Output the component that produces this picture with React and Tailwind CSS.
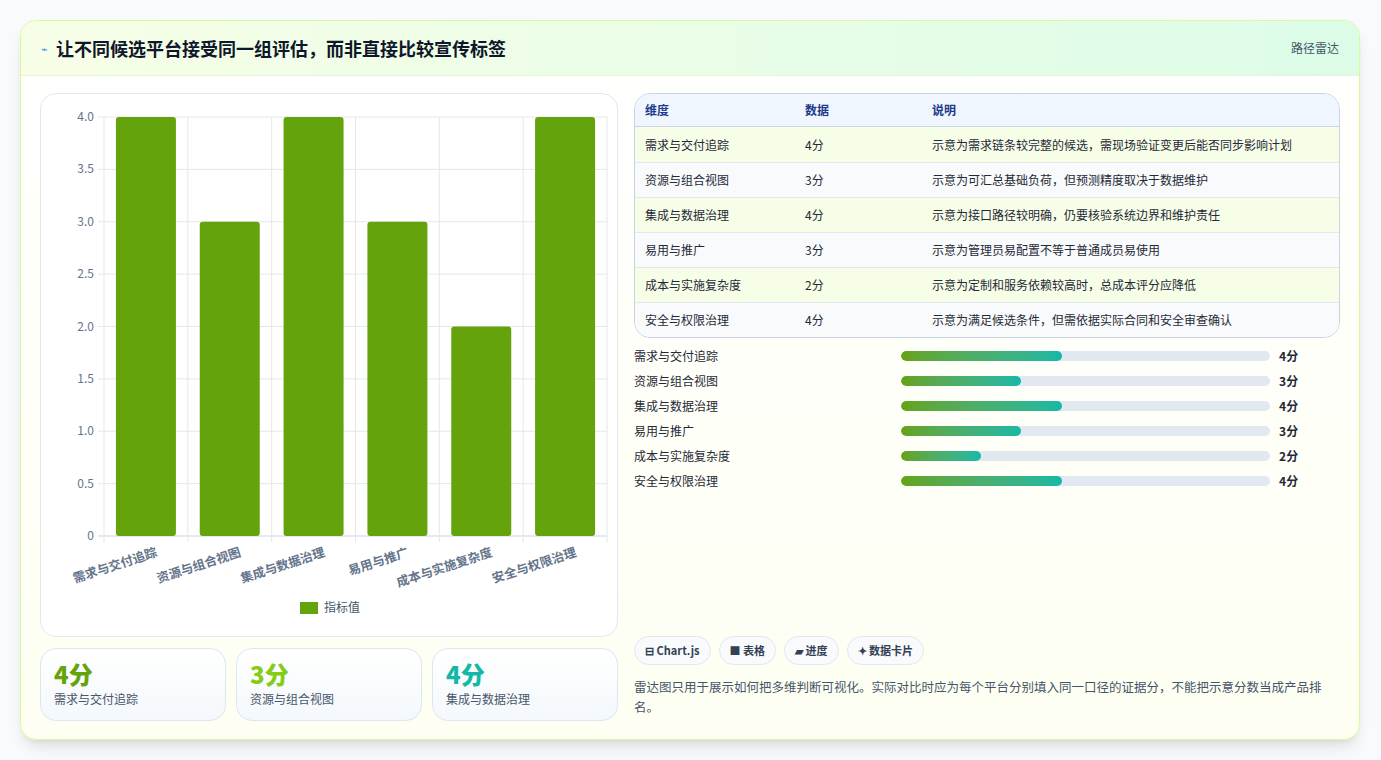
const dims = [
  ["需求与交付追踪", 4, "示意为需求链条较完整的候选，需现场验证变更后能否同步影响计划"],
  ["资源与组合视图", 3, "示意为可汇总基础负荷，但预测精度取决于数据维护"],
  ["集成与数据治理", 4, "示意为接口路径较明确，仍要核验系统边界和维护责任"],
  ["易用与推广", 3, "示意为管理员易配置不等于普通成员易使用"],
  ["成本与实施复杂度", 2, "示意为定制和服务依赖较高时，总成本评分应降低"],
  ["安全与权限治理", 4, "示意为满足候选条件，但需依据实际合同和安全审查确认"],
];

function Chart() {
  const x0 = 63, x1 = 566, yt = 23, yb = 442;
  const cw = (x1 - x0) / 6;
  const ys = [0, 0.5, 1, 1.5, 2, 2.5, 3, 3.5, 4];
  const Y = (v) => yb - (v / 4) * (yb - yt);
  return (
    <svg width="576" height="530" className="block">
      {ys.map((v) => (
        <g key={v}>
          <line x1={x0 - 6} x2={x1} y1={Y(v)} y2={Y(v)} stroke={v === 0 ? "#cbd5e1" : "#e5e7eb"} />
          <text x={x0 - 10} y={Y(v) + 4} textAnchor="end" fontSize="12" fill="#64748b">{v === 0 ? "0" : v.toFixed(1)}</text>
        </g>
      ))}
      {[0, 1, 2, 3, 4, 5, 6].map((i) => (
        <line key={i} x1={x0 + i * cw} x2={x0 + i * cw} y1={yt} y2={yb + 6} stroke="#e5e7eb" />
      ))}
      {dims.map(([n, v], i) => {
        const cx = x0 + i * cw + cw / 2;
        return (
          <g key={n}>
            <rect x={cx - 30} y={Y(v)} width="60" height={yb - Y(v)} rx="3" fill="#65a30d" />
            <text transform={`translate(${cx + 12},${yb + 20}) rotate(-18)`} textAnchor="end" fontSize="12.5" fontWeight="700" fill="#64748b">{n}</text>
          </g>
        );
      })}
      <rect x="259" y="508" width="18" height="12" fill="#65a30d" />
      <text x="283" y="518" fontSize="12" fill="#475569">指标值</text>
    </svg>
  );
}

export default function App() {
  return (
    <div className="w-[1381px] h-[760px] bg-[#f8fafc] pt-[20px] px-[20px]" style={{ fontFamily: '"Noto Sans CJK SC", "Noto Sans", sans-serif' }}>
      <div className="w-[1340px] h-[720px] rounded-2xl border border-[#d9f99d] shadow-lg overflow-hidden bg-gradient-to-b from-white to-[#fefff2]">
        <div className="h-[55px] flex items-center justify-between px-[20px] bg-gradient-to-r from-[#f7fee7] to-[#dcfce7] border-b border-[#e5f3d6]">
          <div className="flex items-center gap-2">
            <span className="text-[11px] text-[#3b82f6]">⌁</span>
            <span className="text-[18px] font-bold text-[#0f172a]">让不同候选平台接受同一组评估，而非直接比较宣传标签</span>
          </div>
          <span className="text-[12px] text-[#475569]">路径雷达</span>
        </div>
        <div className="flex gap-[16px] px-[19px] pt-[17px]">
          <div className="w-[579px] flex flex-col gap-[11px]">
            <div className="h-[544px] rounded-2xl border border-[#e2e8f0] bg-white">
              <Chart />
            </div>
            <div className="flex gap-[10px]">
              {[[4, "text-[#65a30d]"], [3, "text-[#84cc16]"], [4, "text-[#14b8a6]"]].map(([v, c], i) => (
                <div key={i} className="flex-1 h-[73px] rounded-2xl border border-[#dbe6f3] bg-gradient-to-b from-white to-[#f4f8fc] px-[13px] pt-[10px]">
                  <div className={`text-[24px] font-extrabold leading-[30px] ${c}`}>{v}分</div>
                  <div className="text-[12px] text-[#475569] mt-[1px]">{dims[i][0]}</div>
                </div>
              ))}
            </div>
          </div>
          <div className="w-[707px] flex flex-col">
            <div className="rounded-2xl border border-[#cbd5e1] overflow-hidden text-[12px]">
              <div className="flex h-[33px] items-center bg-[#eff6ff] border-b border-[#cbd5e1] text-[#1e3a8a] font-bold">
                <div className="w-[170px] pl-[10px]">维度</div>
                <div className="w-[127px]">数据</div>
                <div>说明</div>
              </div>
              {dims.map(([n, v, d], i) => (
                <div key={n} className={`flex h-[35px] items-center text-[#1f2937] ${i ? "border-t border-[#e2e8f0]" : ""} ${i % 2 ? "bg-[#f8fafc]" : "bg-[#f7fee7]"}`}>
                  <div className="w-[170px] pl-[10px]">{n}</div>
                  <div className="w-[127px]">{v}分</div>
                  <div>{d}</div>
                </div>
              ))}
            </div>
            <div className="mt-[10px] flex flex-col gap-[9px]">
              {dims.map(([n, v]) => (
                <div key={n} className="flex items-center h-[16px] text-[12px] text-[#1f2937]">
                  <div className="w-[267px]">{n}</div>
                  <div className="w-[369px] h-[10px] rounded-full bg-[#e2e8f0] overflow-hidden">
                    <div className="h-full rounded-full bg-gradient-to-r from-[#65a30d] to-[#14b8a6]" style={{ width: `${(v / 9.2) * 100}%` }} />
                  </div>
                  <div className="ml-[9px] font-bold">{v}分</div>
                </div>
              ))}
            </div>
            <div className="mt-[147px] flex gap-[8px] text-[11px] font-bold text-[#334155]">
              {["⊟ Chart.js", "■ 表格", "▰ 进度", "✦ 数据卡片"].map((t) => (
                <div key={t} className="h-[29px] px-[10px] flex items-center rounded-full border border-[#e2e8f0] bg-[#f8fafc]">{t}</div>
              ))}
            </div>
            <p className="mt-[12px] text-[12.5px] leading-[20px] text-[#475569]">雷达图只用于展示如何把多维判断可视化。实际对比时应为每个平台分别填入同一口径的证据分，不能把示意分数当成产品排名。</p>
          </div>
        </div>
      </div>
    </div>
  );
}
